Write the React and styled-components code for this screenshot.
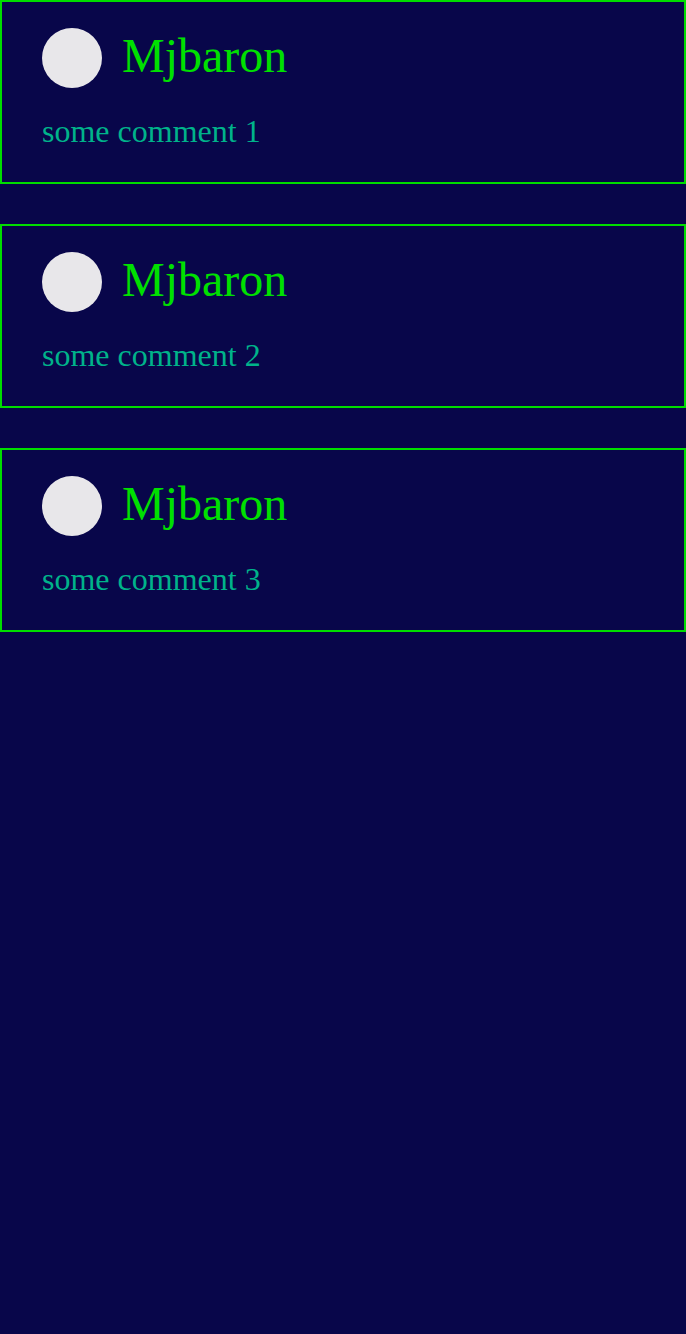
import React from "react";
import styled, { createGlobalStyle } from "styled-components";

const Global = createGlobalStyle`
  html, body {
    margin: 0;
    padding: 0;
    background: #08064a;
    min-height: 100%;
  }
  body {
    font-family: "Liberation Serif", "Times New Roman", serif;
  }
`;

const List = styled.div`
  display: flex;
  flex-direction: column;
  gap: 40px;
`;

const Card = styled.article`
  box-sizing: border-box;
  width: 100%;
  border: 2px solid #00dd00;
  padding: 26px 40px 33px;
  display: flex;
  flex-direction: column;
  gap: 25px;
`;

const Header = styled.div`
  display: flex;
  align-items: center;
  gap: 20px;
  height: 60px;
`;

const Avatar = styled.div`
  width: 60px;
  height: 60px;
  border-radius: 50%;
  background: #e8e7ea;
  flex-shrink: 0;
`;

const Name = styled.h2`
  margin: 0 0 4px;
  font-weight: normal;
  font-size: 48px;
  line-height: 1.1;
  color: #00e000;
`;

const Comment = styled.p`
  margin: 0;
  font-size: 32px;
  line-height: 36px;
  color: #00b38a;
`;

const comments = [1, 2, 3].map((n) => ({ id: n, user: "Mjbaron", text: `some comment ${n}` }));

export default function App() {
  return (
    <>
      <Global />
      <List>
        {comments.map((c) => (
          <Card key={c.id}>
            <Header>
              <Avatar />
              <Name>{c.user}</Name>
            </Header>
            <Comment>{c.text}</Comment>
          </Card>
        ))}
      </List>
    </>
  );
}
